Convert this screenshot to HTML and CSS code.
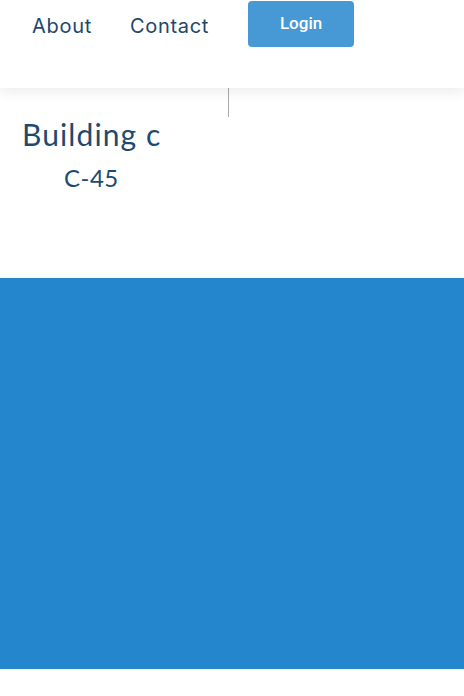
FILE: index.html
```html
<!DOCTYPE html>
<html>
<head>
<meta charset="utf-8">
<link rel="stylesheet" href="styles.css">
</head>
<body>
<header class="topbar">
  <nav class="nav">
    <a class="nav-link" href="#">About</a>
    <a class="nav-link" href="#">Contact</a>
    <button class="login">Login</button>
  </nav>
</header>
<main class="content">
  <div class="divider"></div>
  <h1 class="title">Building c</h1>
  <p class="code">C-45</p>
</main>
<section class="banner"></section>
</body>
</html>
```
FILE: styles.css
```css
* { box-sizing: border-box; }
html, body { margin: 0; padding: 0; background: #fff; }
body { width: 464px; height: 696px; overflow: hidden; font-family: Inter, "Open Sans", sans-serif; }
.topbar {
  height: 88px;
  background: #fff;
  box-shadow: 0 4px 12px rgba(0,0,0,0.08);
  position: relative;
  z-index: 1;
}
.nav {
  display: flex;
  align-items: flex-start;
  padding-left: 32px;
}
.nav-link {
  font-family: Inter, sans-serif;
  font-weight: 400;
  font-size: 20px;
  letter-spacing: 0.7px;
  color: #23466a;
  text-decoration: none;
  margin-top: 14px;
  line-height: 24px;
}
.nav-link + .nav-link { margin-left: 38px; }
.login {
  margin-left: 39px;
  margin-top: 1px;
  width: 106px;
  height: 46px;
  border: none;
  border-radius: 4px;
  background: #4799d6;
  color: #fff;
  font-family: Roboto, sans-serif;
  font-weight: 500;
  font-size: 17px;
  padding: 0 0 2px;
}
.content {
  height: 190px;
  padding-left: 22px;
  position: relative;
}
.divider {
  position: absolute;
  left: 228px;
  top: 0;
  width: 1px;
  height: 29px;
  background: #aaa;
}
.title {
  margin: 0;
  padding-top: 28px;
  font-family: Lato, sans-serif;
  font-weight: 400;
  font-size: 30px;
  letter-spacing: 1.1px;
  line-height: 36px;
  color: #1d4a6e;
}
.code {
  margin: 12px 0 0 42px;
  font-family: Lato, sans-serif;
  font-size: 24px;
  letter-spacing: 0.5px;
  line-height: 28px;
  color: #1d4a6e;
}
.banner {
  height: 391px;
  background: #2487cd;
}
```
